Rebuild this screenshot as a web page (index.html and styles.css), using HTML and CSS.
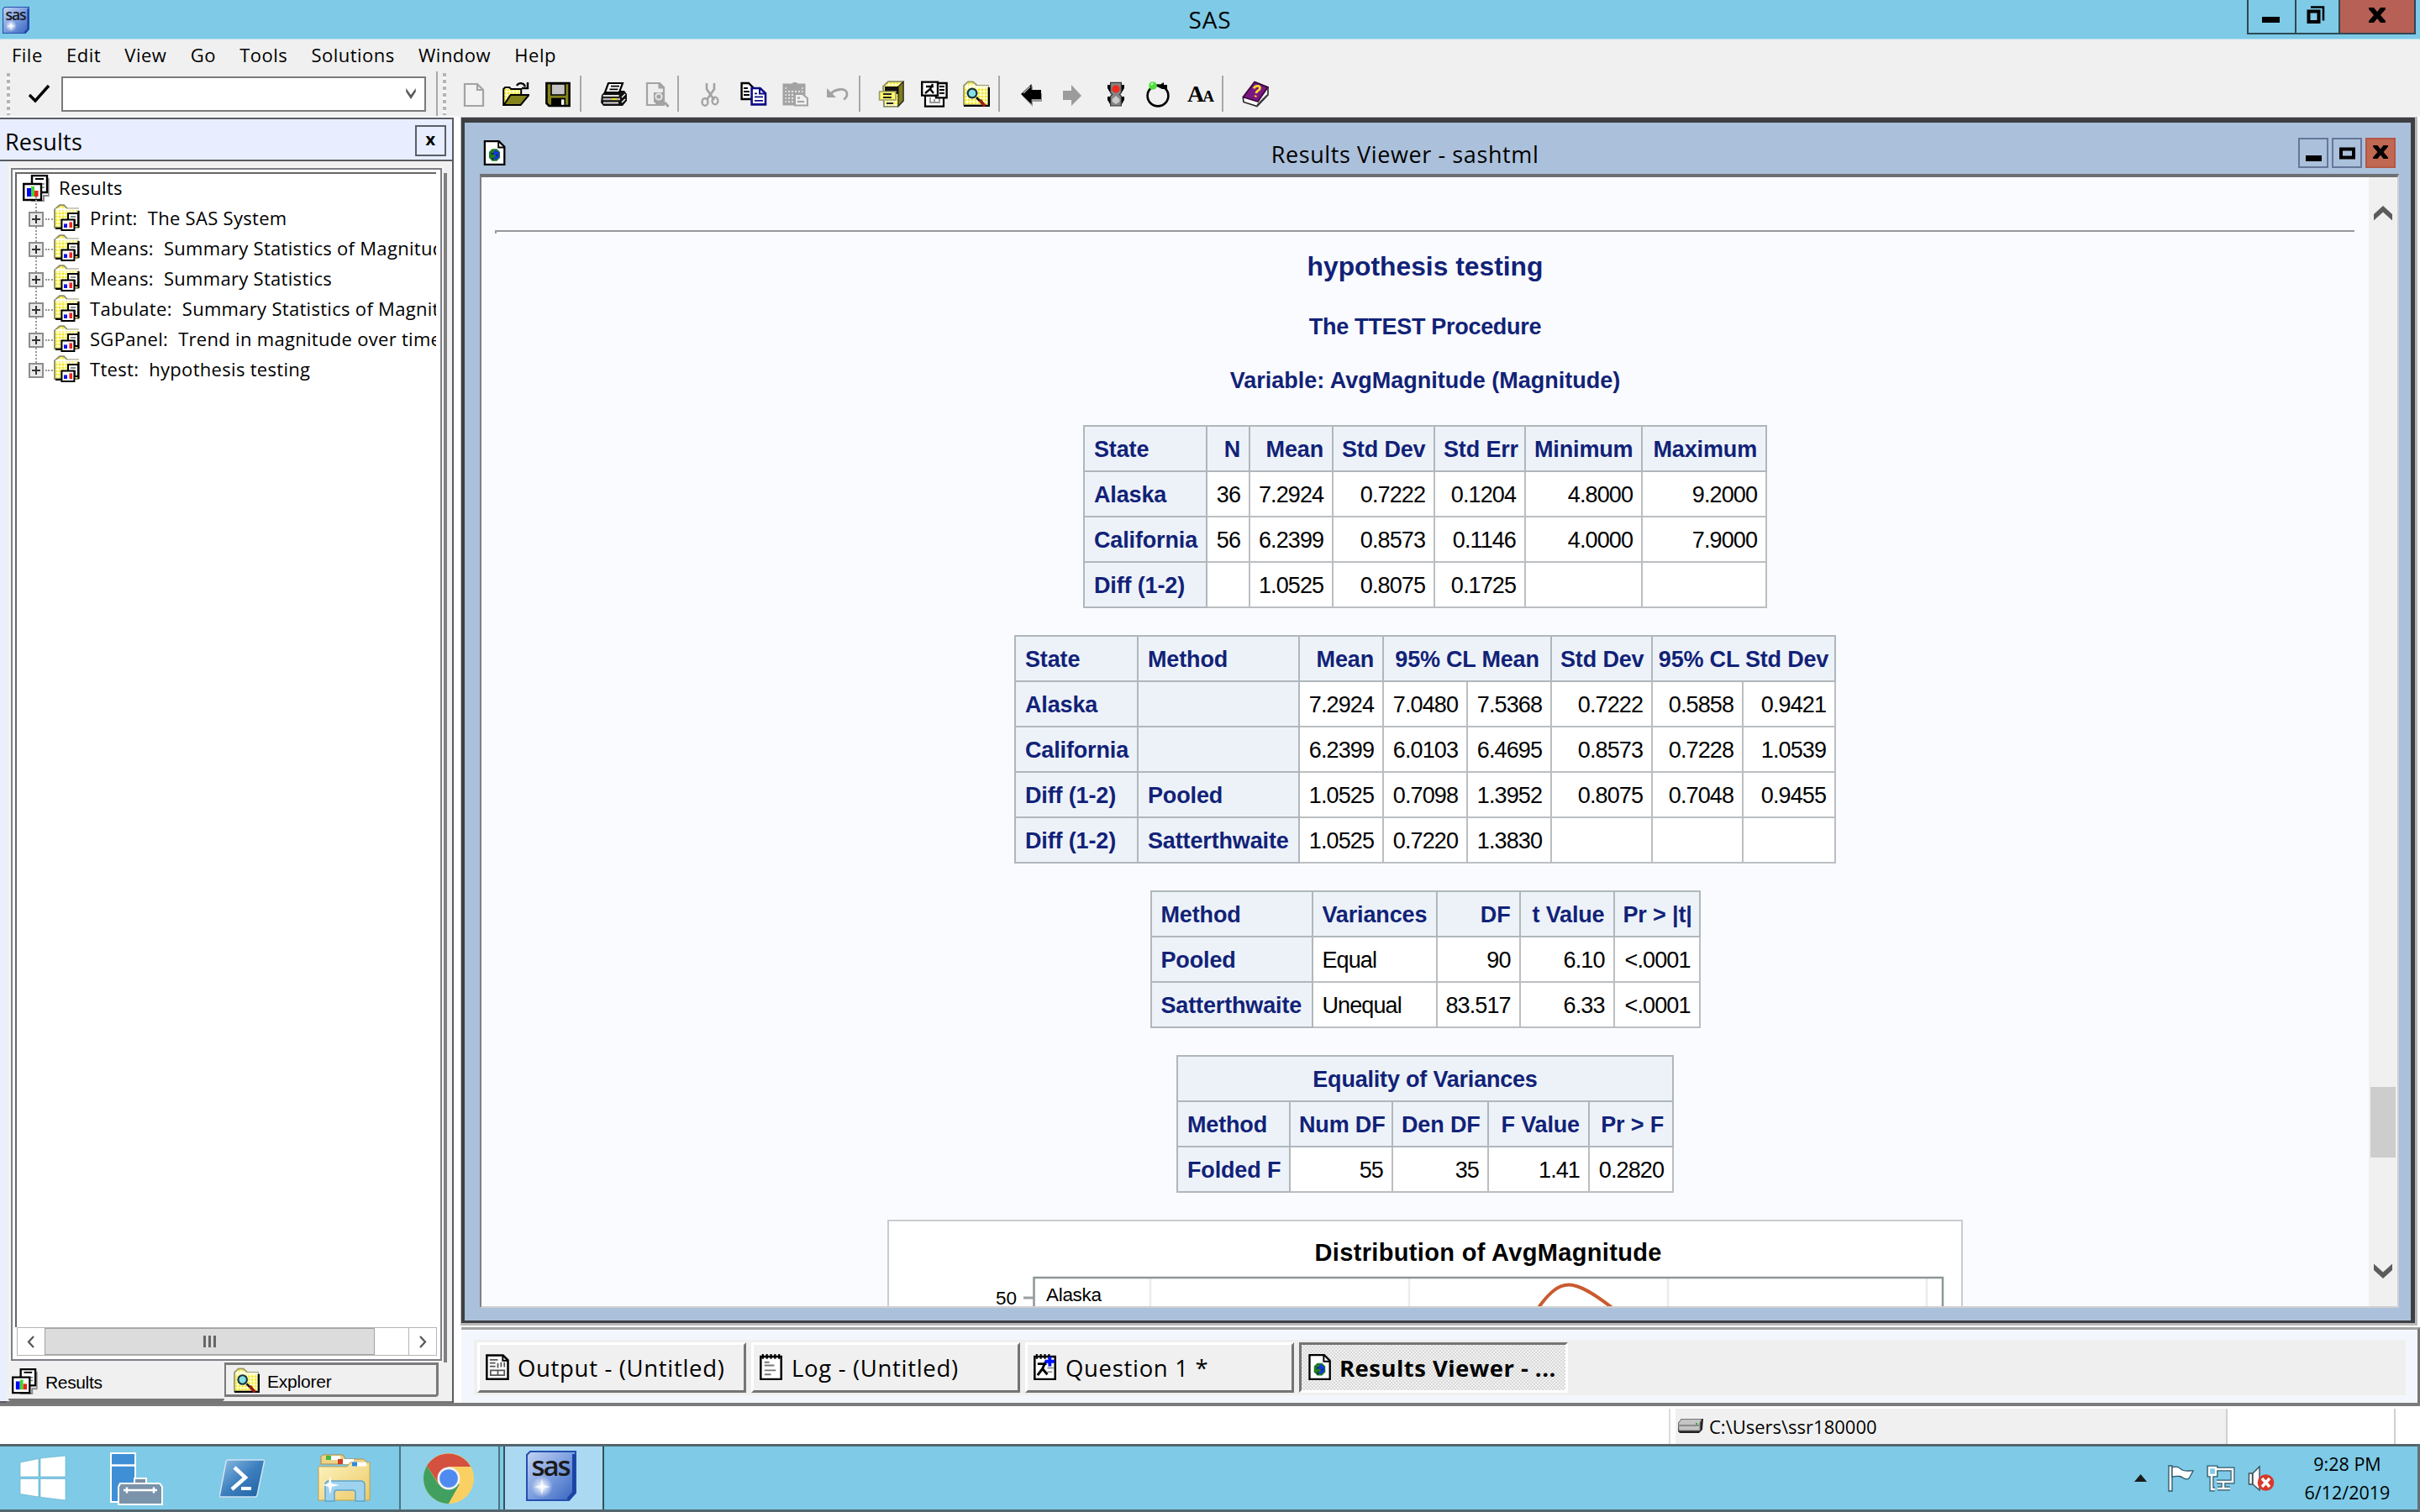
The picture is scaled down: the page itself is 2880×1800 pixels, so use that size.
FILE: index.html
```html
<!DOCTYPE html>
<html lang="en">
<head>
<meta charset="utf-8">
<title>SAS</title>
<link rel="stylesheet" href="styles.css">
</head>
<body>
<svg class="defs" width="0" height="0">
  <defs>
    <linearGradient id="gs" x1="0" y1="0" x2="1" y2="1"><stop offset="0" stop-color="#c3d3f2"/><stop offset=".5" stop-color="#7d9fe0"/><stop offset="1" stop-color="#3563bd"/></linearGradient>
    <radialGradient id="gl"><stop offset="0" stop-color="#fff"/><stop offset="1" stop-color="#fff" stop-opacity="0"/></radialGradient>
    <linearGradient id="gp" x1="0" y1="0" x2="1" y2="1"><stop offset="0" stop-color="#8fbde3"/><stop offset=".5" stop-color="#3c7fbf"/><stop offset="1" stop-color="#1f5f9f"/></linearGradient>
    <linearGradient id="gf" x1="0" y1="0" x2="1" y2="1"><stop offset="0" stop-color="#fdf3c0"/><stop offset="1" stop-color="#ecc965"/></linearGradient>
    <pattern id="dither" width="2" height="2" patternUnits="userSpaceOnUse"><rect width="2" height="2" fill="#fdf97a"/><rect width="1" height="1" fill="#fff"/><rect x="1" y="1" width="1" height="1" fill="#efe34a"/></pattern>
    <pattern id="dgray" width="2" height="2" patternUnits="userSpaceOnUse"><rect width="2" height="2" fill="#a5a5a5"/><rect width="1" height="1" fill="#e4e4e4"/></pattern>
    <symbol id="i-results" viewBox="0 0 16 16">
      <path d="M5 15h7v-3h3V2h.8v11H13v3H5z" fill="#8a8a8a"/>
      <path d="M5.500.5h9v10h-9z" fill="#fff" stroke="#000" stroke-width="1.200"/><path d="M7.500 2.500h5" stroke="#000"/><path d="M11 5.500h2M11.500 7.500h1.500" stroke="#777" stroke-width=".8"/>
      <path d="M.6 5.500h10.400v9.500H.6z" fill="#fff" stroke="#000" stroke-width="1.200"/>
      <path d="M2.500 8H5v5H2.500z" fill="#00f"/><path d="M5 7h2v6H5z" fill="#3fd62c"/><path d="M7 9.500h2.300V13H7z" fill="#e8251c"/>
    </symbol>
    <symbol id="i-folder" viewBox="0 0 16 16">
      <path d="M.5 14V3.200L3.500.6h2.500L8 2.700h6.500V14z" fill="url(#dither)" stroke="#8c8c66" stroke-width=".9"/><path d="M1 3.200h14" stroke="#fff"/>
      <path d="M1 14.500h4M14.800 4v10" stroke="#000"/>
      <path d="M8.500 5.500h6v7h-6z" fill="#fff" stroke="#000"/><path d="M10 7.500h3M12.800 9v3" stroke="#666" stroke-width=".7"/>
      <path d="M4.700 9.200h7.500v6.300H4.700z" fill="#fff" stroke="#000" stroke-width="1"/><path d="M6 11.700h2v2.300H6z" fill="#1212ee"/><path d="M9.200 10.700h1.800v3.300H9.200z" fill="#ef2525"/>
    </symbol>
    <symbol id="i-explore" viewBox="0 0 16 16">
      <path d="M.5 14.500V3L3 .7h3L8.500 3H15v11.500z" fill="url(#dither)" stroke="#999968" stroke-width=".9"/><path d="M.5 15H15.500V4" fill="none" stroke="#000"/>
      <path d="M1 3.500h14" stroke="#fff" stroke-width=".8"/>
      <circle cx="5.500" cy="7.500" r="2.700" fill="#86e0e6" stroke="#16333c" stroke-width="1.100"/><path d="M8 10l2 2" stroke="#111" stroke-width="1.300"/><path d="M10 11.500l3 3.700" stroke="#9b1d14" stroke-width="1.900"/>
    </symbol>
    <symbol id="i-globe" viewBox="0 0 16 16">
      <path d="M1.800.6h9l3.500 3.500v11.300H1.800z" fill="#fff" stroke="#000" stroke-width="1.200"/><path d="M10.500.8V4.500H14" fill="none" stroke="#000" stroke-width="1"/>
      <path d="M6.500 5.500h3l2 2v3.500l-2 2.200h-3l-2-2.200V7.500z" fill="#1f7a26"/><path d="M8.500 6l2.500 2v2.500L8.800 12.500 7.500 11.500 9 10 7 8.500z" fill="#1634e0"/><path d="M6 8h1.500v1H6zM6.500 11h1v1.500h-1zM9 9h1v1H9z" fill="#0b2a4f"/>
    </symbol>
    <symbol id="i-sas" viewBox="0 0 60 60">
      <path d="M5 1h54v49l-8 9H1V5z" fill="url(#gs)" stroke="#2450ad" stroke-width="2"/><path d="M57 4v46l-7 8" fill="none" stroke="#1c43a5" stroke-width="4"/>
      <circle cx="19" cy="43" r="13" fill="url(#gl)"/><path d="M19 33l2 8 8 2-8 2-2 8-2-8-8-2 8-2z" fill="#fff" opacity=".7"/>
      <text x="30" y="30" text-anchor="middle" textLength="47" font-family="Open Sans, sans-serif" font-weight="600" font-size="33" fill="#1b1b1b">sas</text>
    </symbol>
    <symbol id="i-chev" viewBox="0 0 22 18"><path d="M0 17.500V10L11 0l11 10v7.500L11 7.500z" fill="#5c5c5c"/></symbol>
  </defs>
</svg>

<header class="titlebar">
  <svg class="app-ico"><use href="#i-sas"/></svg>
  <h1>SAS</h1>
  <div class="winbtns">
    <span class="wb min"><svg width="21" height="7"><path d="M0 0h21v7H0z"/></svg></span>
    <span class="wb max"><svg width="22" height="22"><path d="M2.500 6.500h12v12.500h-12z" fill="none" stroke="#000" stroke-width="4"/><path d="M5 1.500h15v16" fill="none" stroke="#000" stroke-width="2.500"/></svg></span>
    <span class="wb cls"><svg width="20" height="18"><path d="M0 0h6l4 5 4-5h6v2l-6 7 6 7v2h-6l-4-5-4 5H0v-2l6-7-6-7z"/></svg></span>
  </div>
</header>

<nav class="menu"><span>File</span><span>Edit</span><span>View</span><span>Go</span><span>Tools</span><span>Solutions</span><span>Window</span><span>Help</span></nav>

<div class="toolbar">
  <i class="grip"></i>
  <svg class="check" width="26" height="26" viewBox="0 0 26 26"><path d="M1 14l7 7L24 3" fill="none" stroke="#000" stroke-width="3.400"/></svg>
  <div class="combo"><svg width="16" height="18" viewBox="0 0 16 18"><path d="M0 0v6l8 12 8-12V0L8 11z" fill="#5c5c5c"/></svg></div>
  <i class="sep tall"></i><i class="grip g2"></i>
  <div class="tools">
    <svg class="x0" viewBox="0 0 16 16"><path d="M2.500 2h7.500l3.500 3.500v9.500h-11z M10 2v3.500h3.500" fill="#f2f2f2" stroke="#a3a3a3" stroke-width="1.100"/></svg>
    <svg class="x1" viewBox="0 0 16 16"><path d="M.6 14.500V5l1-1h2.500l1 1h6v3" fill="url(#dither)" stroke="#000"/><path d="M.8 14.500L4.800 8.500h11l-5 6z" fill="#84841c" stroke="#000"/><path d="M8.500 3c1-2 4-2 5 .5M15 1v3.500h-3.500" fill="none" stroke="#000" stroke-width="1.200"/></svg>
    <svg class="x2" viewBox="0 0 16 16"><path d="M1.200 1.500h13.600v13.500H2.700l-1.500-1.500z" fill="#84841c" stroke="#000" stroke-width="1.300"/><path d="M4 2h8.300V8.500H4z" fill="#c3c3c3" stroke="#000" stroke-width=".8"/><path d="M4 10.300h8.500V15H4z"/><path d="M10 11.200h1.700v3.200H10z" fill="#fff"/></svg>
    <i class="sep s0"></i>
    <svg class="x3" viewBox="0 0 16 16"><path d="M1 8.500L3.500 6h11L16 8v4l-2.500 3H2L.5 13z" fill="#111"/><path d="M5 1.500h8.500l-2 5.500H3z" fill="#fff" stroke="#000" stroke-width="1.100"/><path d="M6.500 3.300h5M5.700 5.200h5" stroke="#000" stroke-width=".8"/><path d="M1.800 9h9.500M2 13.200h9" stroke="#dedede"/><path d="M1.800 11h5.200M10 11h2" stroke="#b5b5b5" stroke-width="1.200"/><path d="M7 11h3" stroke="#eee22a" stroke-width="1.200"/><path d="M13 10l2-2M13 13l2-2" stroke="#fff" stroke-width=".7"/></svg>
    <svg class="x4" viewBox="0 0 16 16"><path d="M2 1.500h7.500L12 4v10.500H2z" fill="#eee" stroke="#a3a3a3" stroke-width="1.100"/><path d="M6 7h6v6H6z" fill="#a3a3a3"/><circle cx="9" cy="9.500" r="1.800" fill="none" stroke="#e8e8e8"/><path d="M9.500 1.500v2.500H12M7 13.500h6l1.800 2" fill="none" stroke="#a3a3a3" stroke-width="1.500"/></svg>
    <i class="sep s1"></i>
    <svg class="x5" viewBox="0 0 16 16"><path d="M6 1.500v3.500l4.500 6.500M10.500 1.500v3.500L6 11.500" fill="none" stroke="#a3a3a3" stroke-width="1.300"/><ellipse cx="5" cy="12.700" rx="1.700" ry="2.200" fill="none" stroke="#a3a3a3" stroke-width="1.200"/><ellipse cx="11" cy="12" rx="1.700" ry="2.200" fill="none" stroke="#a3a3a3" stroke-width="1.200"/></svg>
    <svg class="x6" viewBox="0 0 16 16"><path d="M.8 1.500H5l2.500 2.500v7H.8z" fill="#fff" stroke="#000" stroke-width="1.200"/><path d="M2 4.500h2.500M2 6.500h3.500M2 8.500h3.500" stroke="#000" stroke-width=".9"/><path d="M6.800 4.500h5l3.200 3v6.700H6.800z" fill="#fff" stroke="#0b0b86" stroke-width="1.300"/><path d="M11.500 4.500v3.200H15" fill="none" stroke="#0b0b86"/><path d="M8.500 7.700H10M8.500 9.700h5M8.500 11.900h5" stroke="#0b0b86" stroke-width=".9"/></svg>
    <svg class="x7" viewBox="0 0 16 16"><path d="M1.500 2.500h12v11.500h-12z" fill="url(#dgray)" stroke="#a3a3a3" stroke-width="1.500"/><path d="M4 5V2.500h2l1-1.500h2l1 1.500h1.500V5z" fill="#a3a3a3"/><path d="M8 8h4.500l3 2.500v4.300H8z" fill="#efefef" stroke="#a3a3a3"/><path d="M9.500 10.300H11M9.500 12.500h4" stroke="#a3a3a3"/></svg>
    <svg class="x8" viewBox="0 0 16 16"><path d="M2 4.500v5.500h5.500z" fill="#a3a3a3"/><path d="M4 8.500c2-3.500 10-5 10-.5 0 1.500-.8 2.500-2 3.200" fill="none" stroke="#a3a3a3" stroke-width="1.400"/></svg>
    <i class="sep s2"></i>
    <svg class="x9" viewBox="0 0 16 16"><path d="M3 3.500L6 .6h9V12l-3.500 3.400H3.500z" fill="url(#dither)" stroke="#8c8c6a" stroke-width=".9"/><path d="M12 3.500l3-2.800V12l-3 3.300z" fill="#807c1c" stroke="#222" stroke-width=".6"/><path d="M4 3.500h8V8H4z" fill="#111"/><path d="M.8 6.500h9.700v5H.8z" fill="#fdf76b" stroke="#9a9a66" stroke-width=".8"/><path d="M3 8h5M3 10h5M5 13.500h4" stroke="#222" stroke-width="1"/></svg>
    <svg class="x10" viewBox="0 0 16 16"><path d="M2.500 9h11v6.300h-11z" fill="#fff" stroke="#000" stroke-width="1.100"/><path d="M5.500 10v3h5.500v-3M8 11v2" fill="none" stroke="#9a9a9a"/><path d="M9 1.500h6.300v8.700H9z" fill="#fff" stroke="#000" stroke-width="1.200"/><path d="M11 3.500h3M11 5.500h3M11 7.500h3" stroke="#000" stroke-width=".9"/><path d="M.6.8h9.400v8H.6z" fill="#fff" stroke="#000" stroke-width="1.200"/><path d="M7 2L5.500 5 2.500 7.500M3 3.500h4.500M5.500 5l2 2.500" fill="none" stroke="#000" stroke-width="1.200"/></svg>
    <svg class="x11" viewBox="0 0 16 16"><use href="#i-explore"/></svg>
    <i class="sep s3"></i>
    <svg class="x12" viewBox="0 0 16 16"><path d="M2.500 9.300L8.500 3v4.500h5.500v5H8.500v3z" fill="#9a9a9a"/><path d="M1.500 8L7.800 2v3.500h5.700V11H7.800v3z"/><path d="M3 7.500L7 3.500" stroke="#bbb" stroke-width=".7"/></svg>
    <svg class="x13" viewBox="0 0 16 16"><path d="M2 6h5V2.500L13 9l-6 6v-3.500H2z" fill="#9c9c9c"/></svg>
    <svg class="x14" viewBox="0 0 16 16"><path d="M3 2.500h10v2L11.500 7h-7L3 4.500zM3 9.500h10v2L11.500 14h-7L3 11.500z"/><path d="M4.800 1.200h6.400v6l-1 1 1 1v5.800H4.800V9.200l1-1-1-1z" fill="#858585" stroke="#333" stroke-width=".6"/><circle cx="8" cy="4.900" r="2.300" fill="#ef2b1d"/><path d="M8 9l2.200 2v1.500L8 14l-2.200-1.500V11z" fill="#c8c8c8"/></svg>
    <svg class="x15" viewBox="0 0 16 16"><circle cx="8" cy="9" r="6.200" fill="#f0f0f0" stroke="#000" stroke-width="1.300"/><path d="M7.500 3.500l4-2.500v1.500h2V5h-3z"/><circle cx="5" cy="3" r="2.400" fill="#4fe03c"/><path d="M4 2.500l1-1" stroke="#d5ffd0" stroke-width="1"/></svg>
    <span class="aa x16"><b>A</b>A</span>
    <i class="sep s4"></i>
    <svg class="x17" viewBox="0 0 16 16"><path d="M.7 10.500L8 1l7.500 3.200v4.300L9 15.300 1 12.700z" fill="#fff" stroke="#222" stroke-width=".8"/><path d="M9 14.500l6-6" stroke="#444" stroke-width=".8"/><path d="M.7 9.800L7.500.8l7.900 3.100L9.500 12.500z" fill="#7b1782" stroke="#3b0a40" stroke-width=".9"/><path d="M7 4.600c1.500-2.300 4.600-1.500 3.500.5-.7 1-2 1.100-2 2.400M8.200 8.800l-.2.900" fill="none" stroke="#f8dc27" stroke-width="1.400"/></svg>
  </div>
</div>

<main class="main">
  <aside class="pane">
    <div class="pane-head"><span>Results</span><b>x</b></div>
    <div class="pane-body">
      <div class="treebox">
        <ul class="tree">
          <li class="root"><svg><use href="#i-results"/></svg>Results</li>
          <li><i></i><svg><use href="#i-folder"/></svg>Print:  The SAS System</li>
          <li><i></i><svg><use href="#i-folder"/></svg>Means:  Summary Statistics of Magnitude</li>
          <li><i></i><svg><use href="#i-folder"/></svg>Means:  Summary Statistics</li>
          <li><i></i><svg><use href="#i-folder"/></svg>Tabulate:  Summary Statistics of Magnitude</li>
          <li><i></i><svg><use href="#i-folder"/></svg>SGPanel:  Trend in magnitude over time</li>
          <li><i></i><svg><use href="#i-folder"/></svg>Ttest:  hypothesis testing</li>
        </ul>
        <div class="hscroll">
          <span class="hb"><svg width="10" height="15"><path d="M8 1L2 7.500 8 14" fill="none" stroke="#555" stroke-width="2.200"/></svg></span>
          <span class="thumb"><i></i><i></i><i></i></span>
          <span class="track"></span>
          <span class="hb"><svg width="10" height="15"><path d="M2 1l6 6.500L2 14" fill="none" stroke="#555" stroke-width="2.200"/></svg></span>
        </div>
      </div>
      <div class="tabs">
        <span class="tab on"><svg><use href="#i-results"/></svg>Results</span>
        <span class="tab off"><svg><use href="#i-explore"/></svg>Explorer</span>
      </div>
    </div>
  </aside>

  <section class="work">
    <div class="viewer">
      <div class="viewer-head">
        <svg class="vi"><use href="#i-globe"/></svg>
        <h2>Results Viewer - sashtml</h2>
        <div class="vbtns">
          <span><svg width="19" height="23"><path d="M0 15h19v7H0z"/></svg></span>
          <span><svg width="19" height="23"><path d="M2 7.500h15v10H2z" fill="none" stroke="#000" stroke-width="4"/></svg></span>
          <span class="r"><svg width="20" height="16" viewBox="0 0 20 18"><path d="M0 0h6l4 5 4-5h6v2l-6 7 6 7v2h-6l-4-5-4 5H0v-2l6-7-6-7z"/></svg></span>
        </div>
      </div>
      <div class="client">
        <div class="report">
          <hr>
          <h3>hypothesis testing</h3>
          <p class="proc">The TTEST Procedure</p>
          <p class="var">Variable: AvgMagnitude (Magnitude)</p>
          <table class="t1">
            <colgroup><col><col><col><col><col><col><col></colgroup>
            <tr><th class="l">State</th><th>N</th><th>Mean</th><th>Std Dev</th><th>Std Err</th><th>Minimum</th><th>Maximum</th></tr>
            <tr><th class="l">Alaska</th><td>36</td><td>7.2924</td><td>0.7222</td><td>0.1204</td><td>4.8000</td><td>9.2000</td></tr>
            <tr><th class="l">California</th><td>56</td><td>6.2399</td><td>0.8573</td><td>0.1146</td><td>4.0000</td><td>7.9000</td></tr>
            <tr><th class="l">Diff (1-2)</th><td></td><td>1.0525</td><td>0.8075</td><td>0.1725</td><td></td><td></td></tr>
          </table>
          <table class="t2">
            <colgroup><col><col><col><col><col><col><col><col></colgroup>
            <tr><th class="l">State</th><th class="l">Method</th><th>Mean</th><th class="c" colspan="2">95% CL Mean</th><th>Std Dev</th><th class="c" colspan="2">95% CL Std Dev</th></tr>
            <tr><th class="l">Alaska</th><th></th><td>7.2924</td><td>7.0480</td><td>7.5368</td><td>0.7222</td><td>0.5858</td><td>0.9421</td></tr>
            <tr><th class="l">California</th><th></th><td>6.2399</td><td>6.0103</td><td>6.4695</td><td>0.8573</td><td>0.7228</td><td>1.0539</td></tr>
            <tr><th class="l">Diff (1-2)</th><th class="l">Pooled</th><td>1.0525</td><td>0.7098</td><td>1.3952</td><td>0.8075</td><td>0.7048</td><td>0.9455</td></tr>
            <tr><th class="l">Diff (1-2)</th><th class="l">Satterthwaite</th><td>1.0525</td><td>0.7220</td><td>1.3830</td><td></td><td></td><td></td></tr>
          </table>
          <table class="t3">
            <colgroup><col><col><col><col><col></colgroup>
            <tr><th class="l">Method</th><th class="l">Variances</th><th>DF</th><th>t Value</th><th>Pr &gt; |t|</th></tr>
            <tr><th class="l">Pooled</th><td class="l">Equal</td><td>90</td><td>6.10</td><td>&lt;.0001</td></tr>
            <tr><th class="l">Satterthwaite</th><td class="l">Unequal</td><td>83.517</td><td>6.33</td><td>&lt;.0001</td></tr>
          </table>
          <table class="t4">
            <colgroup><col><col><col><col><col></colgroup>
            <tr><th class="c" colspan="5">Equality of Variances</th></tr>
            <tr><th class="l">Method</th><th>Num DF</th><th>Den DF</th><th>F Value</th><th>Pr &gt; F</th></tr>
            <tr><th class="l">Folded F</th><td>55</td><td>35</td><td>1.41</td><td>0.2820</td></tr>
          </table>
          <svg class="chart" width="1280" height="200" viewBox="0 0 1280 200">
            <rect x="1" y="1" width="1278" height="240" fill="#fff" stroke="#c9cccf" stroke-width="2"/>
            <text x="715" y="49" text-anchor="middle" textLength="413" class="ct">Distribution of AvgMagnitude</text>
            <path d="M313 70v130M621 70v130M929 70v130M1237 70v130" stroke="#ececec" stroke-width="2.500"/>
            <path d="M174.500 200V69H1256v131" fill="none" stroke="#8f9699" stroke-width="2.500"/>
            <path d="M162 93h12" stroke="#9aa0a3" stroke-width="3"/>
            <text x="129" y="101" textLength="25" class="cl">50</text>
            <text x="189" y="97" textLength="66" class="cl">Alaska</text>
            <path d="M774 106C788 86 799 77.500 811 77.500C824 77.500 841 88 864 106" fill="none" stroke="#ca5a2f" stroke-width="4"/>
          </svg>
        </div>
        <div class="vscroll">
          <svg class="up"><use href="#i-chev"/></svg>
          <i></i>
          <svg class="down"><use href="#i-chev"/></svg>
        </div>
      </div>
    </div>
    <div class="winbar">
      <div class="winbar-in">
        <span class="wtab"><svg viewBox="0 0 16 16"><path d="M1.200.8h10l3 3v11.500h-13z" fill="#fff" stroke="#000" stroke-width="1.300"/><path d="M11 1v3h3" fill="none" stroke="#000"/><path d="M3 3.500h5M3 5.500h3.500M3 7.500h3.500M8 5.500v3M10 5v3M12 5v3M3.500 10h8.500v3h-8.500zM8 10v3" fill="none" stroke="#555" stroke-width=".9"/></svg>Output - (Untitled)</span>
        <span class="wtab l1"><svg viewBox="0 0 16 16"><path d="M1.200 1.500h12.600v14H1.200z" fill="#fff" stroke="#000" stroke-width="1.300"/><path d="M2.500 0v3M5 0v3M7.500 0v3M10 0v3M12.500 0v3" stroke="#000" stroke-width="1.100"/><path d="M3.500 5h3M3.500 7h6M3.500 10h7M3.500 12.500h4" stroke="#777"/></svg>Log - (Untitled)</span>
        <span class="wtab l1"><svg viewBox="0 0 16 16"><path d="M1.200 1.500h12.600v14H1.200z" fill="#fff" stroke="#000" stroke-width="1.300"/><path d="M2.500 0v3M5 0v3M7.500 0v3M10 0v3" stroke="#000" stroke-width="1.100"/><path d="M9 8.500h4M9 11h3" stroke="#999"/><path d="M3 6h5.500M8 4.500L6 9l-3 4M6 9l3 3.500" fill="none" stroke="#000" stroke-width="1.500"/><path d="M10.500 1.500v6M7.500 4.500h6" stroke="#0013ff" stroke-width="2"/></svg>Question 1 *</span>
        <span class="wtab act"><svg><use href="#i-globe"/></svg>Results Viewer - ...</span>
      </div>
    </div>
  </section>
</main>

<footer class="status">
  <span class="path"><svg width="32" height="20" viewBox="0 0 32 20"><path d="M1 6l4-5h26l-1 13-4 4H3l-2-2z" fill="#222"/><path d="M1.500 6L5 1.500h24L27 6v9H2z" fill="#c4c4c4" stroke="#777"/><path d="M2 9h24" stroke="#8c8c8c" stroke-width="2"/><path d="M22 6h2v2h-2z" fill="#28b428"/></svg>C:\Users\ssr180000</span>
  <span class="cell"></span>
</footer>

<div class="taskbar">
  <span class="tk start"><svg width="56" height="54" viewBox="0 0 56 54"><path d="M1 8l22-4.500V25H1zM25 3l30-3v25H25zM1 27.500h22V49L1 45.500zM25 27.500h30V53l-30-3.700z" fill="#fff" stroke="#5aa9c8" stroke-width=".6"/></svg></span>
  <span class="tk srv"><svg width="64" height="64" viewBox="0 0 64 64"><path d="M2 2h29v58H2z" fill="#3f8fd6" stroke="#fff" stroke-width="2"/><path d="M2 16.500h29" stroke="#fff" stroke-width="2.500"/><path d="M30 38v-6h14v6" fill="#7a8fa5" stroke="#fff" stroke-width="2"/><path d="M13 38h47l3 4v21H11V42z" fill="#7a93aa" stroke="#fff" stroke-width="2"/><path d="M17 46h40M21 42.500v7M53 42.500v7" stroke="#fff" stroke-width="2.500"/></svg></span>
  <span class="tk ps"><svg width="54" height="46" viewBox="0 0 54 46"><path d="M10 1h42q2 0 1.500 2L45 43q-.5 2-2.500 2H2q-2 0-1.500-2L8 3q.5-2 2-2z" fill="url(#gp)" stroke="#cfe4f3" stroke-width="1.500"/><path d="M18 10l13 12-16 14" fill="none" stroke="#fff" stroke-width="4.500"/><path d="M26 35h12" stroke="#fff" stroke-width="4"/></svg></span>
  <span class="tk fx"><svg width="64" height="58" viewBox="0 0 64 58"><path d="M4 12V3l2-2h24l3 5h22l5 6z" fill="#eed287" stroke="#b48d3c"/><path d="M10 2h17v5H10z" fill="#fff"/><path d="M10 2h6v5h-6z" fill="#45b83c"/><path d="M24 6h19v6H24z" fill="#fff"/><path d="M24 6h6v6h-6z" fill="#cf4026"/><path d="M1 15h34l4-5h23v45H1z" fill="url(#gf)" stroke="#c7a043"/><path d="M41 9.500h17v5H41z" fill="#fff"/><path d="M41 9.500h6v5h-6z" fill="#2d8be0"/><path d="M9 56V37q0-5 5-5h37q5 0 5 5v19H45V46q0-3-3-3H23q-3 0-3 3v10z" fill="#9fd2ee" stroke="#5fa5d0" stroke-width="1.500"/><path d="M15 25l1.500 10L26 37l-9 2-2 9-2-9-7-2 7-2z" fill="#fff"/></svg></span>
  <span class="tk chrome"><svg width="60" height="60" viewBox="0 0 60 60"><circle cx="30" cy="30" r="30" fill="#fad264"/><path d="M4 15A30 30 0 0 1 56 16H30L18 36z" fill="#d4503f"/><path d="M4 15A30 30 0 0 0 30 60L43 37 18 37z" fill="#41a05f"/><path d="M56 16H30L43 37 30 60A30 30 0 0 0 56 16z" fill="#fbd063"/><circle cx="30" cy="30" r="13.500" fill="#f2f2f2"/><circle cx="30" cy="30" r="10.800" fill="#4f8af0"/></svg></span>
  <span class="tk sas"><svg width="60" height="60"><use href="#i-sas"/></svg></span>
  <div class="tray">
    <svg width="15" height="9"><path d="M0 9L7.500 0 15 9z" fill="#1b1b1b"/></svg>
    <svg class="flag" width="34" height="32" viewBox="0 0 34 32"><path d="M2 1h4v30H2z" fill="#fff" stroke="#2b5667" stroke-width="1.300"/><path d="M6 3c6-2.500 9 1 12 3 4 2 8 .5 13 1l-5 9c-5 3-7-2-11-2.500-4-.5-6-.5-9 1z" fill="#fff" stroke="#2b5667" stroke-width="1.300"/></svg>
    <svg class="net" width="34" height="32" viewBox="0 0 34 32"><path d="M12 5h19v15H12M20 20v7M13 28h15M6 12v17h4" fill="none" stroke="#2b5667" stroke-width="5"/><path d="M3 3h8v9H3z" fill="#fff" stroke="#2b5667" stroke-width="5"/><path d="M12 5h19v15H12M20 20v7M13 28h15M6 12v17h4" fill="none" stroke="#fff" stroke-width="2.600"/><path d="M3 3h8v9H3z" fill="#7fcae6" stroke="#fff" stroke-width="2.400"/></svg>
    <svg class="vol" width="32" height="32" viewBox="0 0 32 32"><path d="M1.500 10h4v13h-4zM6 10l8-8v28l-8-7z" fill="#fff" stroke="#3c4f58" stroke-width="1.400"/><circle cx="21.500" cy="21" r="9.800" fill="#d8382b"/><path d="M17 16l9 10M26 16l-9 10" stroke="#fff" stroke-width="3.400"/></svg>
    <div class="clock"><span>9:28 PM</span><span>6/12/2019</span></div>
  </div>
</div>
</body>
</html>
```
FILE: styles.css
```css
* { box-sizing: border-box; }
body { margin: 0; width: 2880px; height: 1800px; overflow: hidden; background: #fff; display: flex; flex-direction: column; font-family: "Open Sans", "Noto Sans", sans-serif; font-size: 22px; color: #000; }
svg { display: block; flex: none; }
.defs { position: absolute; }
h1, h2, h3, p { margin: 0; font-weight: normal; }

/* Title bar */
.titlebar { flex: none; height: 47px; background: #7ecae7; display: grid; grid-template-columns: 206px 1fr 206px; border-bottom: 1px solid #b5e0f0; }
.app-ico { width: 32px; height: 32px; margin: 8px 0 0 3px; }
.titlebar h1 { font-size: 28px; text-align: center; line-height: 47px; letter-spacing: .8px; }
.winbtns { display: flex; height: 41px; border: 2px solid #2f4852; border-top: 0; margin-right: 5px; }
.wb { display: flex; justify-content: center; align-items: center; border-right: 2px solid #2f4852; }
.min { width: 57px; padding-top: 7px; padding-right: 3px; }
.max { width: 52px; padding: 0 4px 3px 0; }
.cls { flex: 1; background: #b76055; border-right: 0; padding: 0 1px 4px 0; }

/* Menu and toolbar */
.menu { flex: none; height: 38px; background: #f0f0f0; display: flex; gap: 28.300px; padding-left: 14px; line-height: 36px; letter-spacing: .48px; }
.toolbar { flex: none; height: 55px; background: #f0f0f0; display: flex; align-items: center; border-bottom: 2px solid #f8f8f8; }
.grip { width: 4px; height: 50px; margin-left: 8px; background: repeating-linear-gradient(#b4b4b4 0 4px, #f7f7f7 4px 8px); }
.check { margin-left: 22px; }
.combo { width: 434px; height: 42px; margin-left: 13px; background: #fff; border: 2px solid #7a7a7a; display: flex; justify-content: flex-end; align-items: center; padding-right: 8px; }
.combo svg { height: 13px; }
.sep { width: 2px; height: 43px; background: #a8a8a8; flex: none; }
.tall { height: 53px; margin-left: 12px; }
.g2 { margin-left: 6px; }
.tools { display: flex; align-items: center; height: 50px; }
.tools svg { width: 32px; height: 32px; }
.x0 { margin-left: 17px; } .x1 { margin-left: 18px; } .x2 { margin-left: 18px; }
.s0 { margin-left: 10px; } .x3 { margin-left: 22px; } .x4 { margin-left: 20px; }
.s1 { margin-left: 8px; } .x5 { margin-left: 21px; } .x6 { margin-left: 20px; } .x7 { margin-left: 17px; } .x8 { margin-left: 18px; }
.s2 { margin-left: 10px; } .x9 { margin-left: 21px; } .x10 { margin-left: 19px; } .x11 { margin-left: 18px; }
.s3 { margin-left: 10px; } .x12 { margin-left: 22px; } .x13 { margin-left: 17px; } .x14 { margin-left: 19px; } .x15 { margin-left: 18px; }
.aa { font: bold 19px/30px "Liberation Serif", serif; width: 32px; margin-left: 19px; letter-spacing: -2px; white-space: nowrap; padding-top: 4px; }
.aa b { font-size: 28px; }
.s4 { margin-left: 9px; } .x17 { margin-left: 22px; }

/* Main area */
.main { flex: none; height: 1534px; display: flex; gap: 9px; background: #fff; border-bottom: 4px solid #7b7b7b; }
.pane { flex: none; width: 540px; height: 1530px; border: 2px solid #5a5c62; border-left: 0; display: flex; flex-direction: column; background: #e9efff; }
.pane-head { flex: none; height: 50px; border-bottom: 2px solid #5a5c62; background: #e8eeff; display: flex; justify-content: space-between; align-items: center; padding: 5px 7px 0 6px; font-size: 27px; letter-spacing: .2px; }
.pane-head b { width: 37px; height: 37px; border: 2px solid #5c5f68; font-size: 20px; line-height: 29px; text-align: center; margin-top: -3px; }
.pane-body { flex: 1; margin-left: 8px; padding: 8px 0 0 5px; background: #f0f0f0; border-bottom: 3px solid #777; display: flex; flex-direction: column; }
.treebox { flex: none; width: 513px; height: 1420px; border: 2px solid #7c7f88; box-shadow: 0 0 0 2px #f6f6f6, 8px 4px 0 -2px #808080; background: #fff; padding: 3px 3px 4px 3px; display: flex; flex-direction: column; }
.tree { flex: 1; margin: 0 2px 0 0; padding: 0; list-style: none; border-top: 2px solid #666; border-left: 2px solid #666; overflow: hidden; }
.tree li { height: 36px; line-height: 35px; display: flex; align-items: center; padding-left: 14px; letter-spacing: .3px; white-space: pre; }
.tree svg { width: 32px; height: 32px; margin-right: 11px; }
.tree .root { padding-left: 7px; height: 35px; margin-top: -1px; }
.tree li i { width: 18px; height: 18px; border: 2px solid #8d8d8d; margin: 4px 12px 0 0; background: linear-gradient(#333, #333) center / 10px 2px no-repeat, linear-gradient(#333, #333) center / 2px 10px no-repeat, #e8e8e8; position: relative; flex: none; }
.tree li i::before { content: ""; position: absolute; left: 6px; top: -20px; height: 18px; border-left: 2px dotted #999; }
.tree li i::after { content: ""; position: absolute; left: 18px; top: 6px; width: 9px; border-top: 2px dotted #999; }
.hscroll { flex: none; height: 34px; display: flex; border: 1px solid #b4b4b4; margin: 0 1px 0 2px; }
.hb { width: 32px; display: flex; align-items: center; justify-content: center; }
.thumb { width: 393px; background: #dcdcdc; border: 1px solid #a2a2a2; display: flex; gap: 3px; align-items: center; justify-content: center; }
.thumb i { width: 3px; height: 14px; background: #666; }
.track { flex: 1; border-right: 1px solid #b4b4b4; }
.tabs { display: flex; font: 21px "Liberation Sans", Arial, sans-serif; letter-spacing: -.35px; margin-left: -3px; }
.tabs svg { width: 31px; height: 31px; margin-right: 9px; margin-top: -3px; }
.tab { display: flex; align-items: center; }
.on { width: 257px; height: 48px; padding: 6px 0 0 4px; border-bottom: 3px solid #777; border-radius: 0 0 3px 3px; background: #f0f0f0; }
.off { width: 255px; height: 41px; margin-top: 2px; padding: 5px 0 0 9px; border: 3px solid #7a7a7a; border-left-width: 2px; border-radius: 0 0 4px 0; letter-spacing: -.2px; }

.work { flex: 1; min-width: 0; display: flex; flex-direction: column; }
.viewer { flex: none; height: 1435px; width: 2325px; border: 4px solid #3d3f42; border-top-width: 6px; border-right-width: 5px; border-bottom-width: 3px; box-shadow: 1px 1px 0 2px #b9b9b9; background: #abc0db; padding: 0 14px 15px 18px; display: flex; flex-direction: column; }
.viewer-head { flex: none; height: 61px; display: grid; grid-template-columns: 130px 1fr 212px; align-items: center; padding-top: 13px; }
.vi { width: 31px; height: 30px; margin-left: 2px; margin-top: -3px; }
.viewer h2 { font-size: 27px; text-align: center; letter-spacing: .6px; }
.vbtns { display: flex; gap: 4px; justify-content: flex-end; padding-right: 4px; margin-top: -3px; }
.vbtns span { width: 36px; height: 36px; border: 2px solid #66779a; display: flex; justify-content: center; align-items: center; }
.vbtns .r { background: #c16853; border-color: #b45744; padding-bottom: 2px; }
.client { flex: 1; min-height: 0; border: 2px solid #cfd0d2; border-top: 4px solid #6d6f72; border-left-color: #7d7f82; display: flex; overflow: hidden; }
.report { flex: 1; background: #fafbfe; display: flex; flex-direction: column; align-items: center; overflow: hidden; color: #000; font-family: "Liberation Sans", Arial, sans-serif; }
.report > * { flex: none; }
hr { width: 2213px; height: 4px; margin: 63px 0 0; border: 0; background: #fff; border-top: 2px solid #97989b; border-left: 2px solid #97989b; align-self: flex-start; margin-left: 16px; }
.report h3 { font-size: 31.800px; font-weight: bold; line-height: 40px; margin-top: 19px; color: #112277; }
.report p { font-size: 27px; font-weight: bold; line-height: 30px; color: #112277; }
.proc { margin-top: 37px; letter-spacing: -.3px; }
.var { margin-top: 34px; margin-bottom: 6px; }
.report table { table-layout: fixed; border-collapse: collapse; margin-top: 32px; font-size: 27px; }
th, td { height: 54px; padding: 2px 10px 0; border: 2px solid #bbbec1; text-align: right; line-height: 30px; white-space: nowrap; overflow: visible; }
th { background: #edf2f9; color: #112277; font-weight: bold; border-color: #b0b7bb; letter-spacing: -.15px; }
td { background: #fff; letter-spacing: -.9px; }
th.l, td.l { text-align: left; padding-left: 11px; padding-right: 0; }
th.c { text-align: center; padding: 2px 0 0; letter-spacing: -.2px; }
.t1 { width: 814px; }
.t1 col:nth-child(1) { width: 146px; } .t1 col:nth-child(2) { width: 51px; } .t1 col:nth-child(3) { width: 99px; } .t1 col:nth-child(4) { width: 121px; } .t1 col:nth-child(5) { width: 108px; } .t1 col:nth-child(6) { width: 139px; } .t1 col:nth-child(7) { width: 148px; }
.t2 { width: 978px; }
.t2 col:nth-child(1) { width: 146px; } .t2 col:nth-child(2) { width: 192px; } .t2 col:nth-child(3), .t2 col:nth-child(4), .t2 col:nth-child(5) { width: 100px; } .t2 col:nth-child(6) { width: 120px; } .t2 col:nth-child(7) { width: 108px; } .t2 col:nth-child(8) { width: 110px; }
.t3 { width: 655px; }
.t3 col:nth-child(1) { width: 192px; } .t3 col:nth-child(2) { width: 148px; } .t3 col:nth-child(3) { width: 99px; } .t3 col:nth-child(4) { width: 112px; } .t3 col:nth-child(5) { width: 102px; }
.t4 { width: 592px; }
.t4 col:nth-child(1) { width: 134px; } .t4 col:nth-child(2) { width: 122px; } .t4 col:nth-child(3) { width: 114px; } .t4 col:nth-child(4) { width: 120px; } .t4 col:nth-child(5) { width: 100px; }
.chart { margin-top: 32px; }
.ct { font: bold 29px "Liberation Sans", Arial, sans-serif; }
.cl { font: 22.500px "Liberation Sans", Arial, sans-serif; }
.vscroll { width: 34px; background: #f0f0f0; display: flex; flex-direction: column; align-items: center; }
.vscroll svg { width: 22px; height: 18px; }
.up { margin-top: 34px; }
.vscroll i { width: 30px; height: 84px; background: #cdcdcd; margin-top: 1031px; }
.down { transform: rotate(180deg); margin-top: 126px; }

.winbar { margin-top: 5px; flex: 1; border-top: 3px solid #a5a5a5; border-right: 3px solid #777; background: #f3f7fd; padding: 12px 14px 9px 15px; }
.winbar-in { height: 66px; background: #efefef; display: flex; gap: 6px; padding-left: 4px; align-items: center; }
.wtab { width: 320px; height: 60px; border: 3px solid; border-color: #fff #747474 #747474 #fff; background: #f0f0f0; display: flex; align-items: center; font-size: 27.500px; letter-spacing: .68px; padding-left: 6px; white-space: nowrap; }
.wtab svg { width: 31px; height: 31px; margin-right: 8px; margin-top: -2px; }
.act { border-color: #747474 #fff #fff #747474; font-weight: bold; background: repeating-conic-gradient(#d9d9d9 0 25%, #f2f2f2 0 50%) 0 0 / 4px 4px; letter-spacing: .45px; }

/* Status bar and taskbar */
.status { flex: none; height: 45px; background: #fff; display: flex; justify-content: flex-end; padding: 3px 29px 0 0; }
.path { width: 665px; border-left: 2px solid #dcdcdc; border-right: 2px solid #d0d0d0; background: linear-gradient(90deg, #fff 6px, #f0f0f0 6px); padding-left: 8px; display: flex; align-items: center; gap: 6px; }
.cell { width: 200px; border-right: 2px solid #d0d0d0; }
.taskbar { flex: none; height: 81px; background: #7ecae7; border-top: 3px solid #53656d; border-bottom: 3px solid #53656d; border-right: 3px solid #666f73; display: flex; align-items: center; }
.tk { height: 75px; display: flex; align-items: center; }
.start { width: 130px; padding-left: 23px; }
.srv { width: 130px; }
.ps { width: 118px; padding-left: 1px; }
.fx { width: 97px; }
.chrome { width: 120px; justify-content: center; background: #8dd0e8; border: 2px solid #4c7583; border-width: 0 2px; margin-right: 4px; padding-right: 2px; }
.sas { width: 120px; justify-content: center; background: #abd9f2; border: 2px solid #36505c; border-width: 0 2px; padding: 0 6px 5px 0; }
.tray { margin-left: auto; display: flex; align-items: center; }
.flag { margin-left: 24px; }
.net { margin-left: 13px; }
.vol { margin-left: 15px; }
.clock { width: 105px; margin: 0 31px 0 34px; display: flex; flex-direction: column; align-items: center; font-size: 21.500px; line-height: 34px; }
```
